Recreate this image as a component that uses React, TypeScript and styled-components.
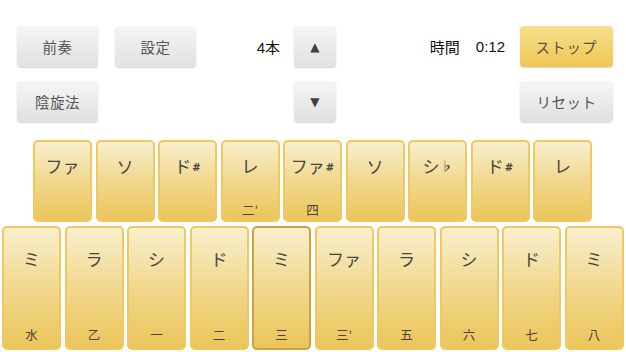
import React from "react";
import styled, { createGlobalStyle } from "styled-components";

const Global = createGlobalStyle`
  html, body { margin: 0; padding: 0; background: #ffffff; }
  body { font-family: "Liberation Sans", "Noto Sans CJK JP", sans-serif; }
`;

const Page = styled.div`
  width: 626px;
  height: 352px;
  overflow: hidden;
  background: #fff;
  display: flex;
  flex-direction: column;
`;

const Controls = styled.div`
  display: grid;
  grid-template-columns: 98px 81px 98px 42px 1fr 93px;
  grid-template-rows: 41px 41px;
  row-gap: 14px;
  padding: 26px 13px 0 17px;
`;

const GreyButton = styled.div<{ $w?: number; $gold?: boolean }>`
  width: ${(p) => (p.$w ? `${p.$w}px` : "100%")};
  height: 41px;
  box-sizing: border-box;
  border-radius: 4px;
  background: ${(p) =>
    p.$gold
      ? "linear-gradient(#f8e08e, #efc653)"
      : "linear-gradient(#f5f5f5, #e1e1e1)"};
  box-shadow: 0 1px 1.5px rgba(0, 0, 0, 0.18);
  display: flex;
  align-items: center;
  justify-content: center;
  font-family: "Noto Sans CJK JP", sans-serif;
  font-size: 14.5px;
  color: ${(p) => (p.$gold ? "#5a5040" : "#555")};
  letter-spacing: ${(p) => (p.$gold ? "1px" : "0.5px")};
`;

const Arrow = styled.span`
  font-size: 12px;
  color: #3f3f3f;
  font-family: "DejaVu Sans", sans-serif;
`;

const Label = styled.div<{ $pr: number }>`
  display: flex;
  align-items: center;
  justify-content: flex-end;
  gap: 16px;
  padding-right: ${(p) => p.$pr}px;
  font-family: "Liberation Sans", "Noto Sans CJK JP", sans-serif;
  font-size: 15px;
  color: #111;
`;

const Keyboard = styled.div`
  display: flex;
  flex-direction: column;
  gap: 4px;
  margin-top: 18px;
`;

const KeyRow = styled.div<{ $pl: number; $h: number }>`
  display: flex;
  gap: 3.5px;
  padding-left: ${(p) => p.$pl}px;
  height: ${(p) => p.$h}px;
`;

const Key = styled.div<{ $sel?: boolean; $top: number; $bottom: number }>`
  width: 59px;
  flex: none;
  box-sizing: border-box;
  border: 2px solid ${(p) => (p.$sel ? "#c9a443" : "#efc862")};
  border-radius: 5px;
  background: linear-gradient(#f8efcd, #f1d88e 50%, #ecc55a);
  display: flex;
  flex-direction: column;
  align-items: center;
  justify-content: space-between;
  padding: ${(p) => p.$top}px 0 ${(p) => p.$bottom}px;
  font-family: "Noto Sans CJK JP", sans-serif;
  color: #48443e;
`;

const Main = styled.div`
  font-size: 17px;
  line-height: 18px;
  height: 18px;
`;

const Sub = styled.div`
  font-size: 12.5px;
  line-height: 14px;
  height: 14px;
`;

const Acc = styled.span<{ $flat?: boolean }>`
  font-family: ${(p) => (p.$flat ? '"Noto Sans CJK JP"' : '"DejaVu Sans"')}, sans-serif;
  font-size: ${(p) => (p.$flat ? "12px" : "10px")};
  font-weight: bold;
  vertical-align: 2px;
  margin-left: 1px;
  color: #48443e;
`;

type K = { m: React.ReactNode; s?: string; sel?: boolean };

const top: K[] = [
  { m: "ファ" },
  { m: "ソ" },
  { m: <>ド<Acc>#</Acc></> },
  { m: "レ", s: "二′" },
  { m: <>ファ<Acc>#</Acc></>, s: "四" },
  { m: "ソ" },
  { m: <>シ<Acc $flat>♭</Acc></> },
  { m: <>ド<Acc>#</Acc></> },
  { m: "レ" },
];

const bottom: K[] = [
  { m: "ミ", s: "水" },
  { m: "ラ", s: "乙" },
  { m: "シ", s: "一" },
  { m: "ド", s: "二" },
  { m: "ミ", s: "三", sel: true },
  { m: "ファ", s: "三′" },
  { m: "ラ", s: "五" },
  { m: "シ", s: "六" },
  { m: "ド", s: "七" },
  { m: "ミ", s: "八" },
];

export default function App() {
  return (
    <Page>
      <Global />
      <Controls>
        <GreyButton $w={81}>前奏</GreyButton>
        <GreyButton $w={81}>設定</GreyButton>
        <Label $pr={14}>4本</Label>
        <GreyButton>
          <Arrow>▲</Arrow>
        </GreyButton>
        <Label $pr={15}>
          <span>時間</span>
          <span>0:12</span>
        </Label>
        <GreyButton $gold>ストップ</GreyButton>

        <GreyButton $w={81}>陰旋法</GreyButton>
        <div />
        <div />
        <GreyButton>
          <Arrow>▼</Arrow>
        </GreyButton>
        <div />
        <GreyButton>リセット</GreyButton>
      </Controls>
      <Keyboard>
        <KeyRow $pl={33} $h={82}>
          {top.map((k, i) => (
            <Key key={i} $top={15} $bottom={3}>
              <Main>{k.m}</Main>
              <Sub>{k.s ?? ""}</Sub>
            </Key>
          ))}
        </KeyRow>
        <KeyRow $pl={2} $h={124}>
          {bottom.map((k, i) => (
            <Key key={i} $sel={k.sel} $top={22} $bottom={6}>
              <Main>{k.m}</Main>
              <Sub>{k.s}</Sub>
            </Key>
          ))}
        </KeyRow>
      </Keyboard>
    </Page>
  );
}
